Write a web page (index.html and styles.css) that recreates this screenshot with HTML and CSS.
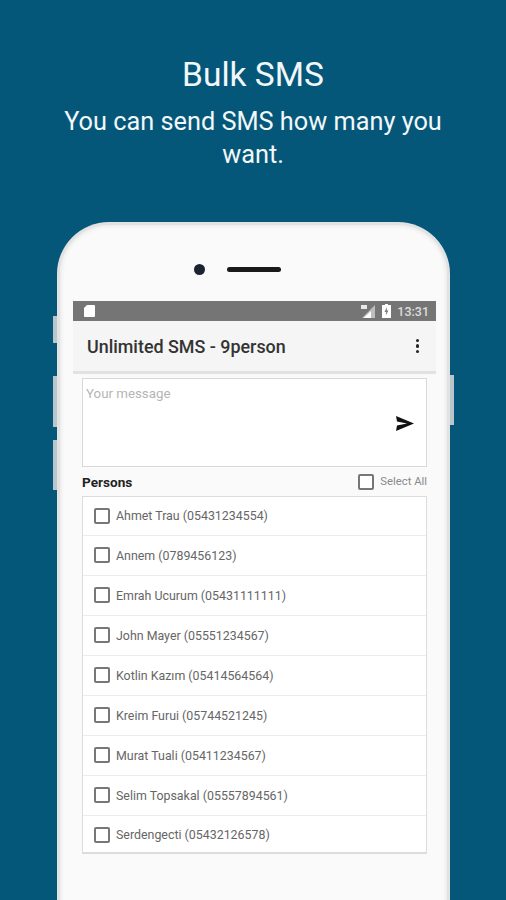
FILE: index.html
```html
<!DOCTYPE html>
<html>
<head>
	<title>Bulk SMS</title>
	<meta charset="UTF-8">
	<link rel="stylesheet" href="styles.css">
</head>
<body>
	<div class="head">
		<h1>Bulk SMS</h1>
		<p>You can send SMS how many you want.</p>
	</div>
	<div class="phone">
		<span class="btn btn1"></span>
		<span class="btn btn2"></span>
		<span class="btn btn3"></span>
		<span class="btn btn4"></span>
		<div class="earpiece">
			<span class="camera"></span>
			<span class="speaker"></span>
		</div>
		<div class="screen">
			<div class="status">
				<svg class="sd" width="11" height="12" viewBox="0 0 11 12"><path d="M3 0H10a1 1 0 0 1 1 1V11a1 1 0 0 1-1 1H1a1 1 0 0 1-1-1V3z" fill="#fff"/></svg>
				<span class="status-right">
					<svg width="16" height="13" viewBox="0 0 16 13"><path d="M15 0V13H2z" fill="#bdbdbd"/><path d="M11 6V13H3.500z" fill="#fff"/><rect x="1" y="0" width="6" height="4" fill="#e8e8e8"/></svg>
					<svg width="9" height="14" viewBox="0 0 9 14"><path d="M3 0H6V1H9V14H0V1H3z" fill="#fff"/><path d="M5 3L2.500 8H4.200L3.800 11.500L6.500 6.500H4.800z" fill="#7a7a7a"/></svg>
					<span class="time">13:31</span>
				</span>
			</div>
			<div class="toolbar">
				<span class="app-title">Unlimited SMS - 9person</span>
				<span class="dots"><i></i><i></i><i></i></span>
			</div>
			<div class="content">
				<div class="message">
					<span class="hint">Your message</span>
					<svg class="send" width="18" height="15" viewBox="0 0 18 15"><path d="M0 0L18 7.500L0 15L1 9.500L11 7.500L1 5.500z" fill="#111"/></svg>
				</div>
				<div class="persons-bar">
					<b>Persons</b>
					<label class="select-all"><span class="check"></span>Select All</label>
				</div>
				<ul class="persons">
					<li><span class="check"></span>Ahmet Trau (05431234554)</li>
					<li><span class="check"></span>Annem (0789456123)</li>
					<li><span class="check"></span>Emrah Ucurum (05431111111)</li>
					<li><span class="check"></span>John Mayer (05551234567)</li>
					<li><span class="check"></span>Kotlin Kazım (05414564564)</li>
					<li><span class="check"></span>Kreim Furui (05744521245)</li>
					<li><span class="check"></span>Murat Tuali (05411234567)</li>
					<li><span class="check"></span>Selim Topsakal (05557894561)</li>
					<li><span class="check"></span>Serdengecti (05432126578)</li>
				</ul>
			</div>
		</div>
	</div>
</body>
</html>
```
FILE: styles.css
```css
*{
	margin: 0;
	padding: 0;
	box-sizing: border-box;
}
html, body{
	height: 900px;
	overflow: hidden;
}
body{
	background-color: #05577a;
	font-family: Roboto, "Liberation Sans", sans-serif;
}
li{
	list-style: none;
}
.head{
	height: 222px;
	padding: 54px 50px 0;
	text-align: center;
	color: #f2f7f9;
}
.head h1{
	font-size: 33.500px;
	font-weight: 400;
	line-height: 42px;
}
.head p{
	font-size: 25.300px;
	line-height: 33px;
	margin: 9px auto 0;
	width: 392px;
}
.phone{
	position: relative;
	width: 393px;
	height: 720px;
	margin-left: 57px;
	padding: 0 14px 0 16px;
	background-color: #fafafa;
	border: 3px solid #e2e2e2;
	border-bottom: 0;
	border-radius: 52px 52px 0 0;
	box-shadow: inset 0 0 5px #dedede;
}
.btn{
	position: absolute;
	width: 4px;
	background-color: #b9c6cd;
}
.btn1{ left: -7px; top: 91px; height: 27px; }
.btn2{ left: -7px; top: 151px; height: 51px; }
.btn3{ left: -7px; top: 215px; height: 50px; }
.btn4{ right: -7px; top: 150px; height: 50px; }
.earpiece{
	height: 76px;
	padding: 39px 0 0 118px;
	display: flex;
	align-items: flex-start;
	gap: 22px;
}
.camera{
	width: 11px;
	height: 11px;
	border-radius: 50%;
	background-color: #1c2230;
}
.speaker{
	width: 54px;
	height: 5px;
	margin-top: 3px;
	border-radius: 3px;
	background-color: #1a1a1a;
}
.screen{
	width: 363px;
	margin-left: -3px;
}
.status{
	height: 20px;
	padding: 0 7px 0 11px;
	background-color: #757575;
	display: flex;
	align-items: center;
	justify-content: space-between;
	color: #ddd;
}
.status-right{
	display: flex;
	align-items: center;
	gap: 6px;
}
.time{
	font-size: 12.500px;
	font-weight: 500;
}
.toolbar{
	height: 53px;
	padding: 0 17px 0 14px;
	background-color: #f5f5f5;
	border-bottom: 3px solid #e2e2e2;
	display: flex;
	align-items: center;
	justify-content: space-between;
}
.app-title{
	font-size: 17.900px;
	font-weight: 500;
	color: #333;
}
.dots{
	display: flex;
	flex-direction: column;
	gap: 2px;
}
.dots i{
	width: 3.500px;
	height: 3.500px;
	background-color: #222;
	border-radius: 50%;
}
.content{
	padding: 4px 9px 0;
	background-color: #fafafa;
}
.message{
	height: 89px;
	padding: 7px 3px;
	background-color: #fff;
	border: 1px solid #d9d9d9;
	display: flex;
	justify-content: space-between;
}
.hint{
	font-size: 13.300px;
	color: #b5b5b5;
}
.send{
	margin: 30px 9px 0 0;
}
.persons-bar{
	height: 29px;
	display: flex;
	align-items: center;
	justify-content: space-between;
}
.persons-bar b{
	font-size: 13.600px;
	font-weight: 700;
	color: #222;
}
.select-all{
	display: flex;
	align-items: center;
	gap: 6px;
	font-size: 11.300px;
	color: #8a8a8a;
}
.check{
	width: 16px;
	height: 16px;
	border: 2px solid #777;
	border-radius: 2px;
	background-color: #fff;
}
.persons{
	background-color: #fff;
	border: 1px solid #dcdcdc;
	border-bottom-width: 2px;
}
.persons li{
	height: 40px;
	padding: 0 0 1px 11px;
	border-bottom: 1px solid #ececec;
	display: flex;
	align-items: center;
	gap: 6px;
	font-size: 12.400px;
	color: #666;
}
.persons li:first-child{
	height: 39px;
}
.persons li:last-child{
	border-bottom: 0;
	height: 36px;
	padding: 1px 0 0 11px;
}
```
